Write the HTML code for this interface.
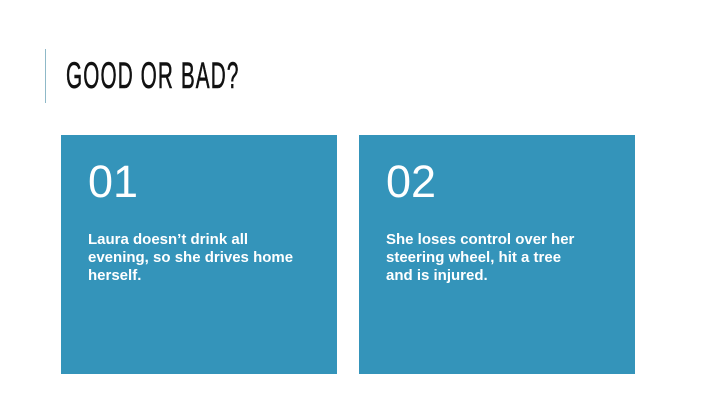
<!DOCTYPE html>
<html><head><style>
html,body{margin:0;padding:0;width:720px;height:405px;background:#fff;overflow:hidden;font-family:"Liberation Sans",sans-serif;}
.bar{position:absolute;left:45px;top:49px;width:1px;height:54px;background:#8fb9c8;}
.title{position:absolute;left:66px;top:55px;font-size:37px;letter-spacing:2px;color:#111;transform:scaleX(0.56);transform-origin:left top;white-space:nowrap;line-height:42px;-webkit-text-stroke:0.6px #111;}
.box{position:absolute;top:135px;width:276px;height:239px;background:#3494ba;color:#fff;}
.num{position:absolute;left:27px;top:22px;font-size:45px;line-height:50px;}
.txt{position:absolute;left:27px;top:96px;width:240px;font-size:15px;font-weight:bold;line-height:18px;white-space:nowrap;}
</style></head><body>
<div class="bar"></div>
<div class="title">GOOD OR BAD?</div>
<div class="box" style="left:61px"><div class="num">01</div><div class="txt">Laura doesn’t drink all<br>evening, so she drives home<br>herself.</div></div>
<div class="box" style="left:359px"><div class="num">02</div><div class="txt">She loses control over her<br>steering wheel, hit a tree<br>and is injured.</div></div>
</body></html>
